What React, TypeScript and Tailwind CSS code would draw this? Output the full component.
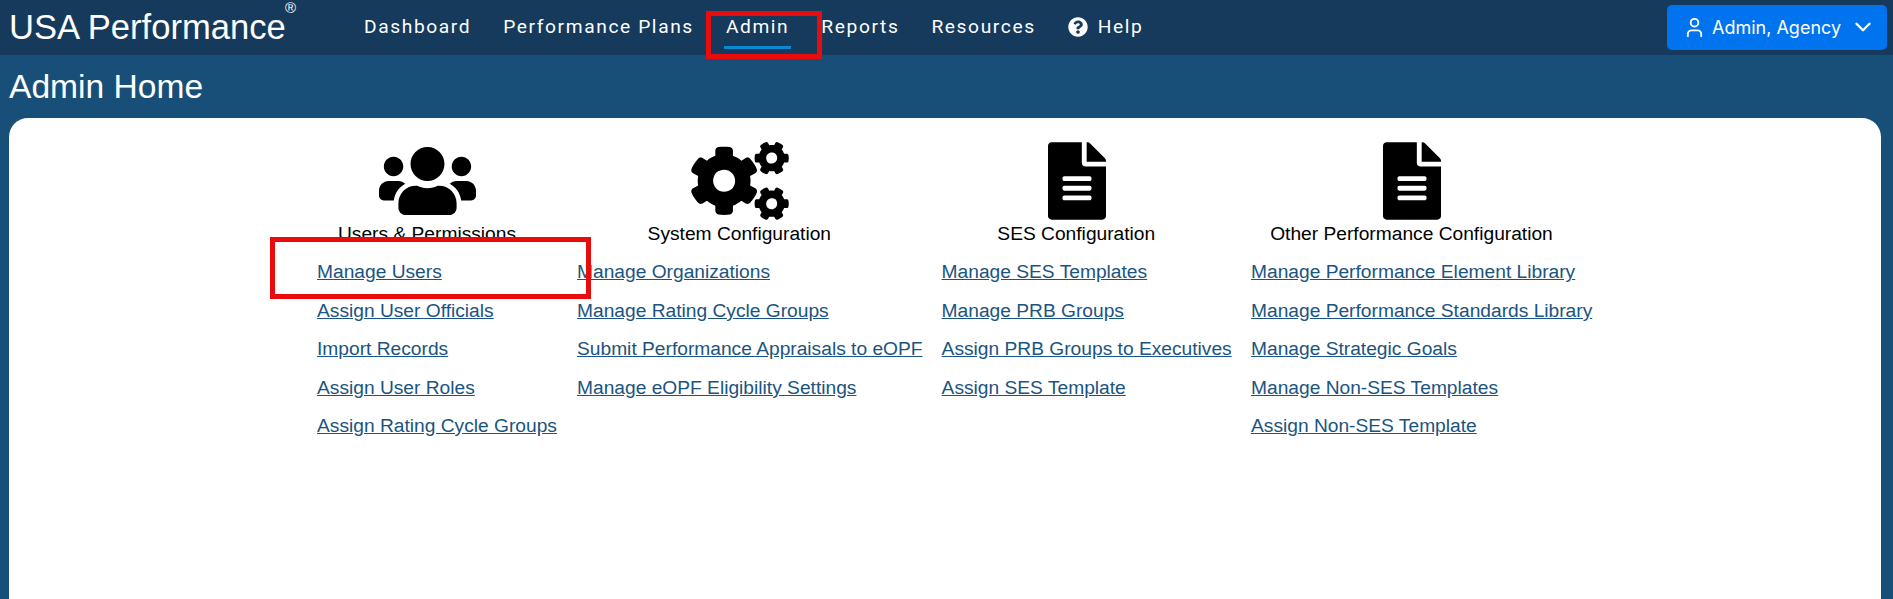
import { ChevronDown, User } from "lucide-react";
import { FaCogs, FaFileAlt, FaQuestionCircle, FaUsers } from "react-icons/fa";
import type { ReactNode } from "react";

const navItems = ["Dashboard", "Performance Plans", "Admin", "Reports", "Resources"];

const columns: { title: string; icon: ReactNode; links: string[]; width: string }[] = [
  {
    title: "Users & Permissions",
    icon: <FaUsers className="h-[78px] w-[97px]" />,
    width: "w-[260px]",
    links: ["Manage Users", "Assign User Officials", "Import Records", "Assign User Roles", "Assign Rating Cycle Groups"],
  },
  {
    title: "System Configuration",
    icon: <FaCogs className="ml-[1px] h-[78px] w-[98px]" />,
    width: "w-[364.6px]",
    links: ["Manage Organizations", "Manage Rating Cycle Groups", "Submit Performance Appraisals to eOPF", "Manage eOPF Eligibility Settings"],
  },
  {
    title: "SES Configuration",
    icon: <FaFileAlt className="ml-[2px] h-[78px] w-[58px]" />,
    width: "w-[309.4px]",
    links: ["Manage SES Templates", "Manage PRB Groups", "Assign PRB Groups to Executives", "Assign SES Template"],
  },
  {
    title: "Other Performance Configuration",
    icon: <FaFileAlt className="ml-[2px] h-[78px] w-[58px]" />,
    width: "w-[361px]",
    links: ["Manage Performance Element Library", "Manage Performance Standards Library", "Manage Strategic Goals", "Manage Non-SES Templates", "Assign Non-SES Template"],
  },
];

export default function App() {
  return (
    <div className="relative h-[599px] overflow-hidden bg-[#184f79] font-['Liberation_Sans',Arial,sans-serif]">
      {/* Top bar */}
      <header className="flex h-[55px] items-center bg-[#153a5c] pl-[9px] pr-[6px] text-white">
        <div className="relative w-[355px] shrink-0 text-[34.6px] leading-none">
          USA Performance
          <span className="absolute left-[276px] top-[-10px] text-[15px] leading-none">®</span>
        </div>
        <nav className="flex items-center gap-[32px] pb-[2px] font-['Roboto',sans-serif] text-[19.2px] leading-none tracking-[1.6px]">
          {navItems.map((item) => (
            <a key={item} className="relative whitespace-nowrap">
              {item}
              {item === "Admin" && <span className="absolute -left-[2px] -right-[2px] top-[29px] h-[3px] bg-[#0a8ad2]" />}
            </a>
          ))}
          <a className="flex items-center gap-[10px] whitespace-nowrap">
            <FaQuestionCircle size={20} />
            Help
          </a>
        </nav>
        <button className="ml-auto flex h-[45px] w-[220px] items-center rounded-[5px] bg-[#0073ef] pb-[1px] pl-[16px] font-['Inter',sans-serif] text-[18px] text-white">
          <User size={23} strokeWidth={2} />
          <span className="ml-[6px]">Admin, Agency</span>
          <ChevronDown size={26} strokeWidth={2.2} className="ml-[9px]" />
        </button>
      </header>

      {/* Page title */}
      <h1 className="flex h-[63px] items-center pl-[9px] text-[33.6px] leading-none text-white">Admin Home</h1>

      {/* Card */}
      <main className="ml-[9px] mr-[12px] h-[481px] rounded-t-[19px] bg-white pl-[288px] pt-[24px]">
        <div className="flex">
          {columns.map((col) => (
            <section key={col.title} className={`${col.width} shrink-0`}>
              <div className="flex h-[78px] justify-center text-black">{col.icon}</div>
              <h2 className="mt-[1px] text-center text-[19.2px] leading-[26px] text-black">{col.title}</h2>
              <ul className="mt-[6.4px] pl-[20px]">
                {col.links.map((link) => (
                  <li key={link} className="h-[38.4px] text-[19.2px] leading-[38px] text-[#1a5481]">
                    <a className="underline whitespace-nowrap">{link}</a>
                  </li>
                ))}
              </ul>
            </section>
          ))}
        </div>
      </main>

      {/* Annotation boxes drawn over the screenshot */}
      <div className="absolute left-[706px] top-[11px] h-[48px] w-[116px] border-[5px] border-[#e80c0c]" />
      <div className="absolute left-[270px] top-[237px] h-[62px] w-[321px] border-[5px] border-[#e80c0c]" />
    </div>
  );
}
